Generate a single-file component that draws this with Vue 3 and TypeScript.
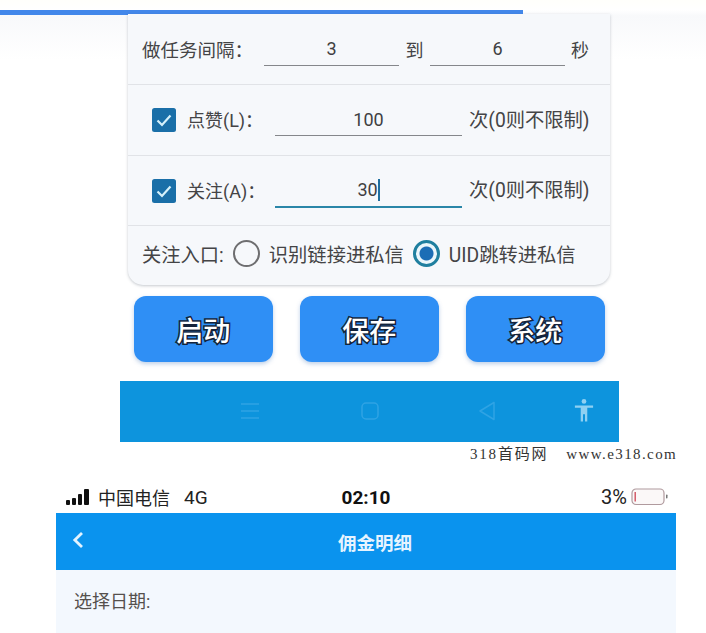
<template>
  <div class="page">
    <div class="progress"></div>

    <section class="card">
      <div class="row row--interval">
        <span class="interval-label">做任务间隔：</span>
        <span class="field field--short">3</span>
        <span class="to">到</span>
        <span class="field field--short">6</span>
        <span class="sec">秒</span>
      </div>

      <div v-for="item in limits" :key="item.label" class="row row--limit">
        <span class="check">
          <svg viewBox="0 0 24 24" width="24" height="24">
            <rect width="24" height="24" rx="2.500" fill="#1a6fa8" />
            <path d="M5.500 12.500 10 17 18.500 7.500" fill="none" stroke="#d5f1fb" stroke-width="2.200" />
          </svg>
        </span>
        <span class="limit-label">{{ item.label }}</span>
        <span class="field field--long" :class="{ 'field--focus': item.focus }">
          <span class="value">{{ item.value }}<i v-if="item.focus" class="caret"></i></span>
        </span>
        <span class="hint">次(0则不限制)</span>
      </div>

      <div class="row row--entry">
        <span>关注入口:</span>
        <span class="radio"></span>
        <span>识别链接进私信</span>
        <span class="radio radio--on"></span>
        <span>UID跳转进私信</span>
      </div>
    </section>

    <div class="actions">
      <button v-for="name in actions" :key="name" class="action">{{ name }}</button>
    </div>

    <nav class="navbar">
      <svg class="nav-icon nav-menu" viewBox="0 0 20 16" width="20" height="16">
        <path d="M1 1h18M1 8h18M1 15h18" fill="none" stroke="#2fa3e4" stroke-width="1.500" />
      </svg>
      <svg class="nav-icon nav-square" viewBox="0 0 18 18" width="18" height="18">
        <rect x="1" y="1" width="16" height="16" rx="4" fill="none" stroke="#2fa3e4" stroke-width="1.500" />
      </svg>
      <svg class="nav-icon nav-back" viewBox="0 0 18 20" width="18" height="20">
        <path d="M16 1.500v17L2 10z" fill="none" stroke="#2fa3e4" stroke-width="1.500" stroke-linejoin="round" />
      </svg>
      <svg class="nav-icon nav-person" viewBox="0 0 22 26" width="20" height="25">
        <circle cx="11" cy="3" r="2.600" fill="#8fd0f2" />
        <path d="M1 7.500h20v2.600h-6.400V25h-2.500v-8h-2.200v8H7.400V10.100H1z" fill="#8fd0f2" />
      </svg>
    </nav>

    <div class="watermark"><span>318首码网</span><span class="url">www.e318.com</span></div>

    <div class="status">
      <span class="status-left">
        <svg viewBox="0 0 26 16" width="26" height="16">
          <rect x="0" y="11" width="4" height="5" rx="1" fill="#111" />
          <rect x="6" y="9" width="4" height="7" rx="1" fill="#111" />
          <rect x="12" y="5" width="4" height="11" rx="1" fill="#111" />
          <rect x="18" y="0" width="5" height="16" rx="1" fill="#111" />
        </svg>
        <span class="carrier">中国电信</span>
        <span class="net">4G</span>
      </span>
      <span class="time">02:10</span>
      <span class="status-right">
        <span class="percent">3%</span>
        <svg class="battery" viewBox="0 0 38 18" width="38" height="18">
          <rect x="1" y="1" width="32" height="15.500" rx="4" fill="#fbf8f8" stroke="#b09a9e" stroke-width="1.200" />
          <rect x="3.500" y="4" width="1.400" height="9.500" fill="#d0505f" />
          <rect x="35" y="6.500" width="1.500" height="4" rx="0.700" fill="#777" />
        </svg>
      </span>
    </div>

    <header class="header">
      <svg class="back" viewBox="0 0 12 18" width="12" height="18">
        <path d="M10 2 2.800 9l7.200 7" fill="none" stroke="#e2f3ff" stroke-width="2.800" />
      </svg>
      <span class="title">佣金明细</span>
    </header>

    <div class="date">选择日期:</div>
  </div>
</template>

<script setup lang="ts">
const limits = [
  { label: "点赞(L)：", value: "100", focus: false },
  { label: "关注(A)：", value: "30", focus: true },
];

const actions = ["启动", "保存", "系统"];
</script>

<style>
html,
body {
  margin: 0;
  background: #fff;
}
</style>

<style scoped>
.page {
  width: 706px;
  height: 633px;
  overflow: hidden;
  padding-top: 10px;
  box-sizing: border-box;
  font-family: "Roboto", "Noto Sans CJK SC", sans-serif;
  color: #444446;
  background: linear-gradient(#fffffb 0, #fff 10px, #f8f9fb 16px, #fff 60px);
}

.progress {
  width: 523px;
  height: 5px;
  background: #4287ea;
}

.card {
  width: 482px;
  height: 271px;
  margin: -1px 0 0 128px;
  box-sizing: border-box;
  display: flex;
  flex-direction: column;
  background: #f6f8fb;
  border-radius: 0 0 15px 15px;
  box-shadow: 0 1px 3px rgba(90, 100, 115, 0.35);
  font-size: 19px;
}

.row {
  display: flex;
  align-items: center;
  box-sizing: border-box;
  border-bottom: 1px solid #e1e3e7;
}

.row--interval {
  height: 71px;
  padding-left: 14px;
}

.interval-label {
  width: 122px;
  white-space: nowrap;
  font-size: 18.500px;
}

.field {
  display: flex;
  justify-content: center;
  align-items: center;
  box-sizing: border-box;
  border-bottom: 1.500px solid #85878b;
  color: #3f3f42;
  font-size: 18px;
}

.field--short {
  width: 135px;
  height: 34px;
}

.to {
  width: 31px;
  text-align: center;
  font-size: 18px;
}

.sec {
  margin-left: 6px;
  font-size: 18px;
}

.row--limit {
  height: 71px;
  padding-left: 24px;
}

.row--limit + .row--limit {
  height: 70px;
}

.check {
  width: 24px;
  height: 24px;
  flex: none;
}

.limit-label {
  width: 88px;
  margin: 0 0 2px 11px;
  white-space: nowrap;
  font-size: 18px;
}

.field--long {
  width: 187px;
  height: 32px;
}

.field--focus {
  height: 34px;
  border-bottom: 2.500px solid #2a86a8;
}

.value {
  display: inline-flex;
  align-items: center;
}

.caret {
  width: 2px;
  height: 22px;
  background: #1f6fa0;
}

.hint {
  margin: 0 0 3px 7px;
  white-space: nowrap;
  font-size: 19.300px;
}

.row--entry {
  flex: 1;
  padding: 0 0 4px 14px;
  border-bottom: none;
  gap: 9px;
  font-size: 19.300px;
}

.radio {
  width: 27px;
  height: 27px;
  box-sizing: border-box;
  border: 2.500px solid #6e6e70;
  border-radius: 50%;
  flex: none;
}

.radio--on {
  border: 3px solid #1f7f9f;
  background: radial-gradient(circle, #1c6db5 0 6.500px, #eaf6fb 7.500px);
}

.actions {
  display: flex;
  gap: 27.500px;
  margin: 11px 0 0 134px;
}

.action {
  width: 138.500px;
  height: 66px;
  padding: 0;
  border: none;
  border-radius: 12px;
  background: #2f8ff5;
  box-shadow: 0 2px 4px rgba(70, 120, 190, 0.35);
  color: #fff;
  font-family: inherit;
  font-size: 27px;
  font-weight: 500;
  -webkit-text-stroke: 3px #14233a;
  paint-order: stroke fill;
}

.navbar {
  position: relative;
  width: 499px;
  height: 61px;
  margin: 19px 0 0 120px;
  background: #0d94dd;
}

.nav-icon {
  position: absolute;
}

.nav-menu {
  left: 120px;
  top: 22px;
}

.nav-square {
  left: 241px;
  top: 21px;
}

.nav-back {
  left: 358px;
  top: 20px;
}

.nav-person {
  left: 454px;
  top: 17px;
}

.watermark {
  display: flex;
  gap: 18px;
  height: 24px;
  margin-left: 470px;
  font-family: "Liberation Serif", "Noto Sans CJK SC", serif;
  font-size: 15px;
  letter-spacing: 1.800px;
  line-height: 24px;
  color: #333;
  white-space: nowrap;
}

.url {
  letter-spacing: 1.400px;
}

.status {
  display: grid;
  grid-template-columns: 1fr auto 1fr;
  align-items: center;
  width: 600px;
  height: 47px;
  margin-left: 66px;
  padding-top: 15px;
  box-sizing: border-box;
  color: #222;
  font-size: 19px;
}

.status-left {
  display: flex;
  align-items: center;
}

.carrier {
  margin-left: 6px;
  font-size: 18px;
}

.net {
  margin-left: 14px;
}

.time {
  font-weight: 700;
  color: #111;
}

.status-right {
  display: flex;
  align-items: center;
  justify-content: flex-end;
  gap: 4px;
}

.percent {
  font-size: 20px;
}

.battery {
  margin-right: -3px;
}

.header {
  position: relative;
  display: flex;
  align-items: center;
  justify-content: center;
  width: 620px;
  height: 57px;
  margin-left: 56px;
  background: #0a93ee;
  color: #e6f4ff;
  font-size: 18.500px;
  font-weight: 700;
}

.title {
  margin-left: 18px;
}

.back {
  position: absolute;
  left: 16px;
  top: 18px;
}

.date {
  width: 620px;
  height: 63px;
  margin-left: 56px;
  padding: 19px 0 0 18px;
  box-sizing: border-box;
  background: #f3f8fe;
  color: #55504d;
  font-size: 18px;
  line-height: 26px;
}
</style>
